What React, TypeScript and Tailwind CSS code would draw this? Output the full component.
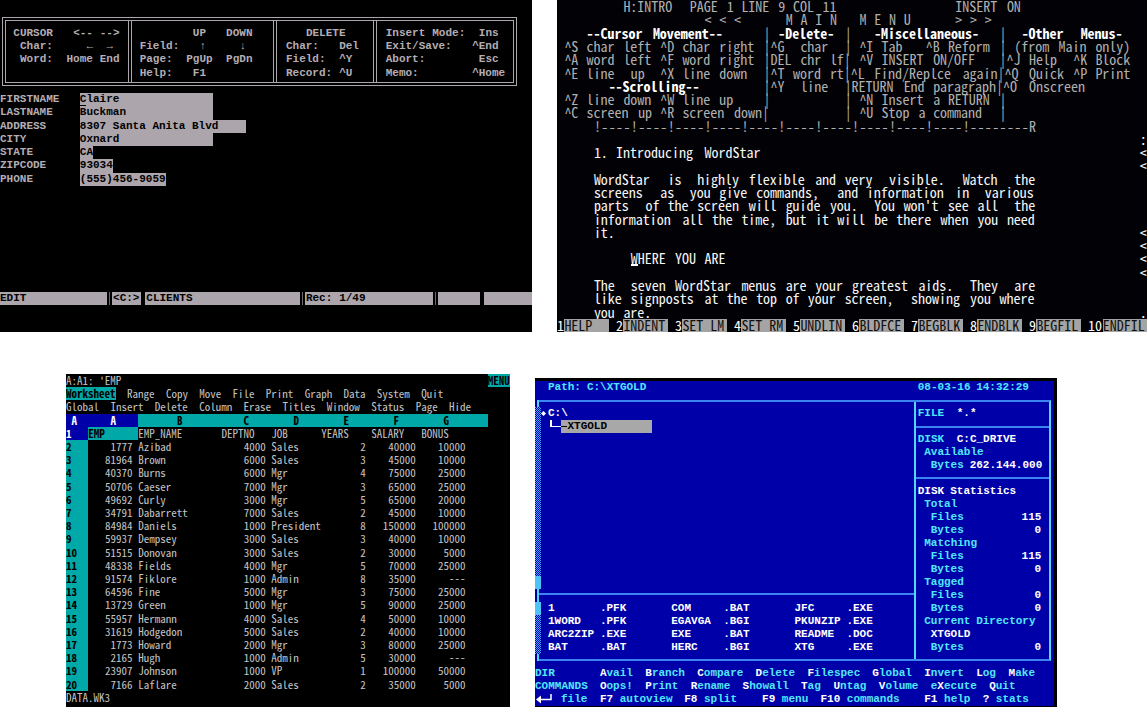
import { Fragment, type ComponentProps, type ElementType, type ReactNode } from "react";

/** An 80 by 25 character cell terminal. */
function Terminal({ label, className, children }: { label: string; className: string; children: ReactNode }) {
  return (
    <section
      aria-label={label}
      className={`grid min-w-0 grid-cols-[repeat(80,minmax(0,1fr))] grid-rows-[repeat(25,minmax(0,1fr))] items-center overflow-hidden whitespace-pre leading-[13px] ${className}`}
    >
      {children}
    </section>
  );
}

type CellProps<T extends ElementType> = {
  as?: T;
  row: number;
  col?: number;
  cols?: number;
  rows?: number;
} & Omit<ComponentProps<T>, "as" | "row" | "col" | "cols" | "rows">;

/** Any element that covers a block of character cells. */
function Cell<T extends ElementType = "span">({ as, row, col = 0, cols = 1, rows = 1, ...rest }: CellProps<T>) {
  const Tag: ElementType = as ?? "span";
  return (
    <Tag {...rest} style={{ gridRow: `${row + 1} / span ${rows}`, gridColumn: `${col + 1} / span ${cols}` }} />
  );
}

/** Puts every word of a string on its own character cell. */
function Print({ row, col = 0, text, className = "" }: { row: number; col?: number; text: string; className?: string }) {
  return (
    <>
      {Array.from(text.matchAll(/\S+/g), (m) => (
        <Cell key={m.index} row={row} col={col + m.index} cols={m[0].length} className={className}>
          {m[0]}
        </Cell>
      ))}
    </>
  );
}

/* ---------- dBASE ---------- */

const dbaseHelp: [number, number, string][] = [
  [2, 2, "CURSOR   <-- -->"],
  [3, 3, "Char:     ←  →"],
  [4, 3, "Word:  Home End"],
  [2, 29, "UP   DOWN"],
  [3, 21, "Field:   ↑     ↓"],
  [4, 21, "Page:  PgUp  PgDn"],
  [5, 21, "Help:   F1"],
  [2, 46, "DELETE"],
  [3, 43, "Char:   Del"],
  [4, 43, "Field:  ^Y"],
  [5, 43, "Record: ^U"],
  [2, 58, "Insert Mode:  Ins"],
  [3, 58, "Exit/Save:   ^End"],
  [4, 58, "Abort:        Esc"],
  [5, 58, "Memo:        ^Home"],
];

const dbaseFields = [
  { name: "FIRSTNAME", value: "Claire", cols: 20 },
  { name: "LASTNAME", value: "Buckman", cols: 20 },
  { name: "ADDRESS", value: "8307 Santa Anita Blvd", cols: 25 },
  { name: "CITY", value: "Oxnard", cols: 20 },
  { name: "STATE", value: "CA", cols: 2 },
  { name: "ZIPCODE", value: "93034", cols: 5 },
  { name: "PHONE", value: "(555)456-9059", cols: 13 },
];

const statusBars = [16, 21, 45, 65, 72];

function Dbase() {
  return (
    <Terminal
      label="Client record"
      className="min-h-[332px] bg-black font-['Liberation_Mono',monospace] text-[11px] font-bold text-[#b4adb4]"
    >
      <Cell
        as="div"
        row={1}
        cols={78}
        rows={6}
        className="mx-[2px] mt-1 mb-[7px] grid grid-cols-[122fr_146fr_100fr_140fr] self-stretch border-4 border-double border-[#aca5ac]"
      >
        <div />
        <div className="border-l-4 border-double border-[#aca5ac]" />
        <div className="border-l-4 border-double border-[#aca5ac]" />
        <div className="border-l-4 border-double border-[#aca5ac]" />
      </Cell>
      {dbaseHelp.map(([row, col, text]) => (
        <Print key={`${row}-${col}`} row={row} col={col} text={text} />
      ))}
      {dbaseFields.map((field, i) => (
        <Fragment key={field.name}>
          <Cell as="label" row={7 + i} cols={12} htmlFor={field.name}>
            {field.name}
          </Cell>
          <Cell
            as="input"
            row={7 + i}
            col={12}
            cols={field.cols}
            id={field.name}
            defaultValue={field.value}
            className="w-full min-w-0 self-stretch bg-[#aca5ac] p-0 text-black outline-none"
          />
        </Fragment>
      ))}
      <Cell row={7} col={12} className="h-px self-end bg-black" />
      <Cell row={22} cols={80} className="self-stretch bg-[#aca5ac]" />
      {statusBars.map((col) => (
        <Cell key={col} row={22} col={col} className="mx-px self-stretch border-x-2 border-black bg-[#6c686c]" />
      ))}
      <Print row={22} text="EDIT             <C:> CLIENTS                 Rec: 1/49" className="text-black" />
    </Terminal>
  );
}

/* ---------- WordStar ---------- */

const wsMenu = [
  "         H:INTRO  PAGE 1 LINE 9 COL 11                INSERT ON",
  "                    < < <      M A I N   M E N U      > > >",
  "                            |          |                    |",
  " ^S char left ^D char right |^G  char  | ^I Tab   ^B Reform | (from Main only)",
  " ^A word left ^F word right |DEL chr lf| ^V INSERT ON/OFF   |^J Help  ^K Block",
  " ^E line  up  ^X line down  |^T word rt|^L Find/Replce again|^Q Quick ^P Print",
  "                            |^Y  line  |RETURN End paragraph|^O Onscreen",
  " ^Z line down ^W line up    |          | ^N Insert a RETURN |",
  " ^C screen up ^R screen down|          | ^U Stop a command  |",
];

const wsHeadings: [number, number, string][] = [
  [2, 4, "--Cursor Movement--"],
  [2, 30, "-Delete-"],
  [2, 43, "-Miscellaneous-"],
  [2, 63, "-Other  Menus-"],
  [6, 7, "--Scrolling--"],
];

const wsRuler = "!----".repeat(10) + "!--------R";

const wsDocument: [number, string][] = [
  [11, "1. Introducing WordStar"],
  [13, "WordStar  is  highly flexible and very  visible.  Watch  the"],
  [14, "screens  as  you give commands,  and information in  various"],
  [15, "parts  of the screen will guide you.  You won't see all  the"],
  [16, "information all the time, but it will be there when you need"],
  [17, "it."],
  [19, "     WHERE YOU ARE"],
  [21, "The  seven WordStar menus are your greatest aids.  They  are"],
  [22, "like signposts at the top of your screen,  showing you where"],
  [23, "you are."],
];

const wsFlags: [number, string][] = [
  [10, ":"],
  [11, "<"],
  [12, "<"],
  [17, "<"],
  [18, "<"],
  [19, "<"],
  [20, "<"],
  [23, "."],
];

const wsKeys = ["HELP", "INDENT", "SET LM", "SET RM", "UNDLIN", "BLDFCE", "BEGBLK", "ENDBLK", "BEGFIL", "ENDFIL"];

function WordStar() {
  return (
    <Terminal
      label="Word processor"
      className="min-h-[332px] bg-[#020206] font-['Noto_Sans_Mono_CJK_JP','Noto_Sans_Mono_CJK_SC','Liberation_Mono',monospace] text-sm leading-[12px] text-[#b0b0b0]"
    >
      {wsMenu.map((line, row) => (
        <Print key={row} row={row} text={line} />
      ))}
      {wsHeadings.map(([row, col, text]) => (
        <Print key={text} row={row} col={col} text={text} className="font-bold text-white" />
      ))}
      {Array.from(wsRuler, (mark, i) => (
        <Cell key={i} row={9} col={5 + i}>
          {mark}
        </Cell>
      ))}
      {wsDocument.map(([row, text]) => (
        <Print key={row} row={row} col={5} text={text} className="text-[#f6f6f6]" />
      ))}
      <Cell row={19} col={10} className="h-[2px] self-end bg-white" />
      {wsFlags.map(([row, mark]) => (
        <Print key={row} row={row} col={79} text={mark} className="text-white" />
      ))}
      {wsKeys.map((name, i) => {
        const digits = String(i + 1);
        return (
          <Fragment key={name}>
            <Print row={24} col={i * 8} text={digits} className="text-white" />
            <Cell
              as="button"
              type="button"
              row={24}
              col={i * 8 + digits.length}
              cols={6}
              className="self-stretch bg-[#a4a4a4] text-left text-[#101010]"
            >
              {name}
            </Cell>
          </Fragment>
        );
      })}
    </Terminal>
  );
}

/* ---------- Lotus 1-2-3 ---------- */

const lotusMenu: [number, number, string][] = [
  [1, 11, "Range"],
  [1, 18, "Copy"],
  [1, 24, "Move"],
  [1, 30, "File"],
  [1, 36, "Print"],
  [1, 43, "Graph"],
  [1, 50, "Data"],
  [1, 56, "System"],
  [1, 64, "Quit"],
  [2, 0, "Global"],
  [2, 8, "Insert"],
  [2, 16, "Delete"],
  [2, 24, "Column"],
  [2, 32, "Erase"],
  [2, 39, "Titles"],
  [2, 47, "Window"],
  [2, 55, "Status"],
  [2, 63, "Page"],
  [2, 69, "Hide"],
];

const employees: string[][] = [
  ["1777", "Azibad", "4000", "Sales", "2", "40000", "10000"],
  ["81964", "Brown", "6000", "Sales", "3", "45000", "10000"],
  ["40370", "Burns", "6000", "Mgr", "4", "75000", "25000"],
  ["50706", "Caeser", "7000", "Mgr", "3", "65000", "25000"],
  ["49692", "Curly", "3000", "Mgr", "5", "65000", "20000"],
  ["34791", "Dabarrett", "7000", "Sales", "2", "45000", "10000"],
  ["84984", "Daniels", "1000", "President", "8", "150000", "100000"],
  ["59937", "Dempsey", "3000", "Sales", "3", "40000", "10000"],
  ["51515", "Donovan", "3000", "Sales", "2", "30000", "5000"],
  ["48338", "Fields", "4000", "Mgr", "5", "70000", "25000"],
  ["91574", "Fiklore", "1000", "Admin", "8", "35000", "---"],
  ["64596", "Fine", "5000", "Mgr", "3", "75000", "25000"],
  ["13729", "Green", "1000", "Mgr", "5", "90000", "25000"],
  ["55957", "Hermann", "4000", "Sales", "4", "50000", "10000"],
  ["31619", "Hodgedon", "5000", "Sales", "2", "40000", "10000"],
  ["1773", "Howard", "2000", "Mgr", "3", "80000", "25000"],
  ["2165", "Hugh", "1000", "Admin", "5", "30000", "---"],
  ["23907", "Johnson", "1000", "VP", "1", "100000", "50000"],
  ["7166", "Laflare", "2000", "Sales", "2", "35000", "5000"],
];

const sheetColumns = [
  { title: "EMP", start: 4, cols: 8, align: "text-right" },
  { title: "EMP_NAME", start: 13, cols: 15, align: "text-left" },
  { title: "DEPTNO", start: 28, cols: 8, align: "text-right" },
  { title: "JOB", start: 37, cols: 9, align: "text-left" },
  { title: "YEARS", start: 46, cols: 8, align: "text-right" },
  { title: "SALARY", start: 55, cols: 8, align: "text-right" },
  { title: "BONUS", start: 64, cols: 8, align: "text-right" },
];

const sheetLetters: [number, string][] = [
  [20, "B"],
  [32, "C"],
  [41, "D"],
  [50, "E"],
  [59, "F"],
  [68, "G"],
];

function Lotus() {
  return (
    <Terminal
      label="Spreadsheet"
      className="min-h-[333px] bg-black pb-[3px] font-['Noto_Sans_Mono_CJK_JP','Noto_Sans_Mono_CJK_SC','Liberation_Mono',monospace] text-[11px] text-[#c4c4c4]"
    >
      <Print row={0} text="A:A1: 'EMP" />
      <Cell row={0} col={76} cols={4} className="self-stretch bg-[#00a8a8] font-bold text-black">
        MENU
      </Cell>
      <Cell
        as="button"
        type="button"
        row={1}
        cols={9}
        className="self-stretch bg-[#00a8a8] text-left font-bold text-black"
      >
        Worksheet
      </Cell>
      {lotusMenu.map(([row, col, name]) => (
        <Cell key={name} as="button" type="button" row={row} col={col} cols={name.length} className="text-left">
          {name}
        </Cell>
      ))}
      <Cell as="table" row={3} cols={80} rows={21} className="grid grid-cols-subgrid grid-rows-subgrid items-stretch self-stretch">
        <thead className="contents">
          <tr className="contents">
            <Cell as="td" row={0} col={13} cols={63} className="bg-[#00a8a8]" />
            <Cell as="td" row={0} cols={13} className="bg-[#0000a8]" />
            <Cell as="th" row={0} col={1} className="text-white">
              A
            </Cell>
            <Cell as="th" row={0} col={8} className="text-white">
              A
            </Cell>
            {sheetLetters.map(([col, letter]) => (
              <Cell as="th" key={letter} row={0} col={col} className="text-left text-black">
                {letter}
              </Cell>
            ))}
          </tr>
        </thead>
        <tbody className="contents">
          <tr className="contents">
            <Cell as="th" row={1} cols={4} className="bg-[#0000a8] text-left text-white">
              1
            </Cell>
            {sheetColumns.map(({ title, start, cols }, i) => (
              <Cell
                as="td"
                key={title}
                row={1}
                col={start}
                cols={i === 0 ? 9 : cols}
                className={i === 0 ? "bg-[#00a8a8] font-bold text-black" : ""}
              >
                {title}
              </Cell>
            ))}
          </tr>
          {employees.map((employee, r) => (
            <tr key={employee[0]} className="contents">
              <Cell as="th" row={r + 2} cols={4} className="bg-[#00a8a8] text-left text-black">
                {r + 2}
              </Cell>
              {sheetColumns.map(({ title, start, cols, align }, i) => (
                <Cell as="td" key={title} row={r + 2} col={start} cols={cols} className={align}>
                  {employee[i]}
                </Cell>
              ))}
            </tr>
          ))}
        </tbody>
      </Cell>
      <Print row={24} text="DATA.WK3" />
    </Terminal>
  );
}

/* ---------- XTree Gold ---------- */

const xtLabels: [number, number, string][] = [
  [0, 2, "Path: C:\\XTGOLD"],
  [0, 59, "08-03-16 14:32:29"],
  [2, 59, "FILE"],
  [4, 59, "DISK"],
  [5, 60, "Available"],
  [6, 61, "Bytes"],
  [9, 60, "Total"],
  [10, 61, "Files"],
  [11, 61, "Bytes"],
  [12, 60, "Matching"],
  [13, 61, "Files"],
  [14, 61, "Bytes"],
  [15, 60, "Tagged"],
  [16, 61, "Files"],
  [17, 61, "Bytes"],
  [18, 60, "Current Directory"],
  [20, 61, "Bytes"],
  [22, 0, "DIR"],
  [23, 0, "COMMANDS"],
  [24, 4, "file"],
];

const xtValues: [number, number, string][] = [
  [2, 2, "C:\\"],
  [2, 65, "*.*"],
  [4, 65, "C:C_DRIVE"],
  [6, 67, "262.144.000"],
  [8, 59, "DISK Statistics"],
  [10, 75, "115"],
  [11, 77, "0"],
  [13, 75, "115"],
  [14, 77, "0"],
  [16, 77, "0"],
  [17, 77, "0"],
  [19, 61, "XTGOLD"],
  [20, 77, "0"],
  [17, 2, "1       .PFK       COM     .BAT       JFC     .EXE"],
  [18, 2, "1WORD   .PFK       EGAVGA  .BGI       PKUNZIP .EXE"],
  [19, 2, "ARC2ZIP .EXE       EXE     .BAT       README  .DOC"],
  [20, 2, "BAT     .BAT       HERC    .BGI       XTG     .EXE"],
];

/* row, column, plain lead, highlighted key, plain rest */
const xtCommands: [number, number, string, string, string][] = [
  [22, 10, "", "A", "vail"],
  [22, 17, "", "B", "ranch"],
  [22, 25, "", "C", "ompare"],
  [22, 34, "", "D", "elete"],
  [22, 42, "", "F", "ilespec"],
  [22, 52, "", "G", "lobal"],
  [22, 60, "", "I", "nvert"],
  [22, 68, "", "L", "og"],
  [22, 73, "", "M", "ake"],
  [23, 10, "", "O", "ops!"],
  [23, 17, "", "P", "rint"],
  [23, 24, "", "R", "ename"],
  [23, 32, "", "S", "howall"],
  [23, 41, "", "T", "ag"],
  [23, 46, "", "U", "ntag"],
  [23, 53, "", "V", "olume"],
  [23, 61, "e", "X", "ecute"],
  [23, 70, "", "Q", "uit"],
  [24, 10, "", "F7", " autoview"],
  [24, 23, "", "F8", " split"],
  [24, 35, "", "F9", " menu"],
  [24, 44, "", "F10", " commands"],
  [24, 60, "", "F1", " help"],
  [24, 69, "", "?", " stats"],
];

const shade = "self-stretch bg-[repeating-conic-gradient(#0000a8_0_25%,#48a8ff_0_50%)] bg-[length:2px_2px]";
const thumb = "self-stretch bg-[#4cc4fa]";

function XTree() {
  return (
    <Terminal
      label="File manager"
      className="mt-1 min-h-[329px] border-t-[3px] border-r-[3px] border-b border-black bg-[#0000a8] font-['Liberation_Mono',monospace] text-[11px] font-bold text-[#50e8fa]"
    >
      <Cell
        as="div"
        row={1}
        cols={80}
        rows={21}
        className="mt-[6px] mr-[3px] mb-[6px] ml-[2px] grid grid-cols-[378fr_136fr] self-stretch border-2 border-l-0 border-[#3c84f0] border-r-[#50d8fa]"
      >
        <div className="grid grid-rows-[195fr_65fr]">
          <div className="border-b-2 border-[#3c84f0]" />
        </div>
        <div className="grid grid-rows-[26fr_52fr_182fr] border-l-2 border-[#50d8fa]">
          <div className="border-b-2 border-[#3c84f0]" />
          <div className="border-b-2 border-[#3c84f0]" />
        </div>
      </Cell>
      <Cell row={1} className="mt-[6px] ml-[2px] w-[2px] self-stretch bg-[#50d8fa]" />
      <Cell row={2} rows={13} className={shade} />
      <Cell row={15} className={thumb} />
      <Cell row={16} className="ml-[2px] w-[2px] self-stretch bg-[#50d8fa]" />
      <Cell row={17} className={thumb} />
      <Cell row={18} rows={3} className={shade} />
      <Cell row={21} className="mb-[6px] ml-[2px] w-[2px] self-stretch bg-[#50d8fa]" />

      <Cell as="svg" row={2} col={1} viewBox="0 0 6 6" className="h-[5px] w-[5px] fill-white" aria-hidden="true">
        <path d="M3 0 6 3 3 6 0 3Z" />
      </Cell>
      <Cell row={3} col={2} cols={2} className="mb-[6px] ml-[2px] self-stretch border-b border-l-2 border-white" />
      <Cell row={3} col={4} cols={14} className="self-stretch bg-[#a8a8a8]" />
      <Cell row={3} col={4} className="h-px bg-black" />
      <Print row={3} col={5} text="XTGOLD" className="text-black" />

      {xtLabels.map(([row, col, text]) => (
        <Print key={`${row}-${col}`} row={row} col={col} text={text} />
      ))}
      {xtValues.map(([row, col, text]) => (
        <Print key={`${row}-${col}`} row={row} col={col} text={text} className="text-white" />
      ))}

      <Cell as="svg" row={24} cols={3} viewBox="0 0 18 13" className="h-[13px] w-[18px]" aria-hidden="true">
        <path d="M1 6.500 6 2.500V10.500Z" fill="white" />
        <path d="M5 6.500H16V1" fill="none" stroke="white" strokeWidth="1.500" />
      </Cell>
      {xtCommands.map(([row, col, lead, key, rest]) => (
        <Cell
          as="button"
          key={`${row}-${col}`}
          type="button"
          row={row}
          col={col}
          cols={lead.length + key.length + rest.length}
          className="text-left"
        >
          {lead}
          <span className="text-white">{key}</span>
          {rest}
        </Cell>
      ))}
    </Terminal>
  );
}

export default function App() {
  return (
    <main className="flex min-h-screen flex-col gap-[42px] overflow-hidden bg-white">
      <div className="grid grid-cols-[532fr_590fr] gap-[25px]">
        <Dbase />
        <WordStar />
      </div>
      <div className="grid grid-cols-[444fr_522fr] gap-[25px] pr-[90px] pl-[66px]">
        <Lotus />
        <XTree />
      </div>
    </main>
  );
}
